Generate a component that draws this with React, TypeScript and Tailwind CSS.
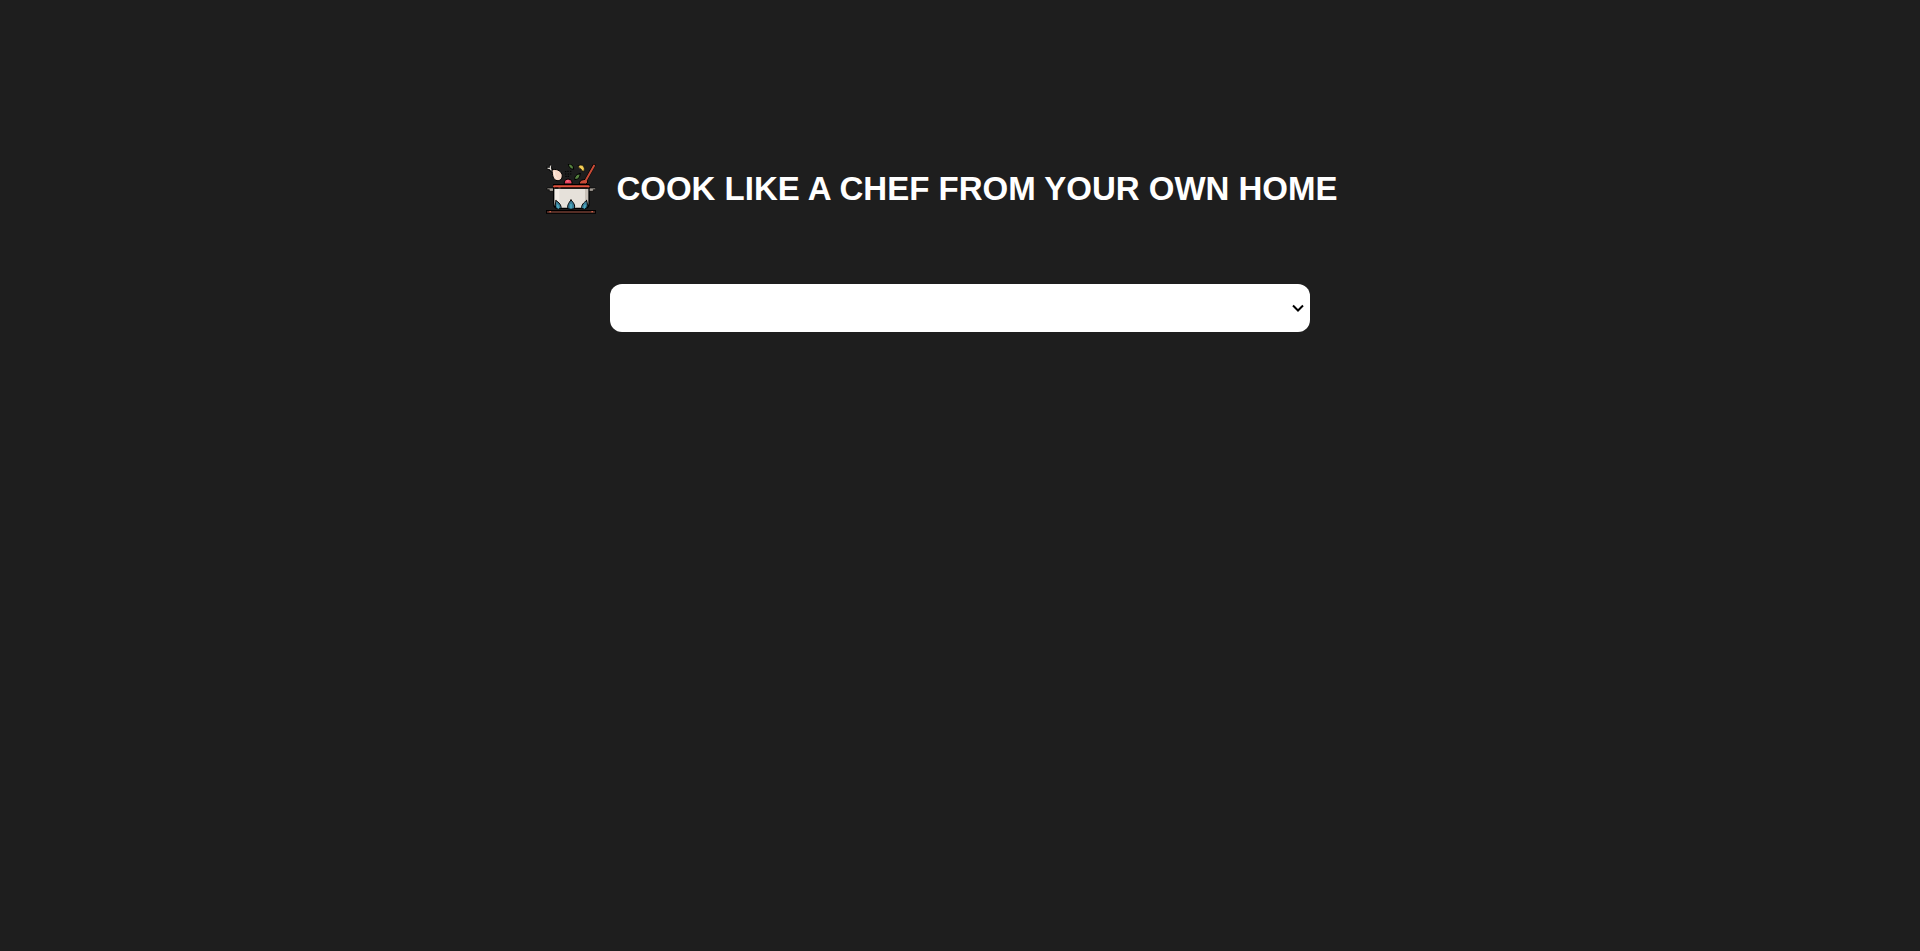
function CookingPot() {
  return (
    <svg
      viewBox="24 24 150 150"
      className="size-[50px] shrink-0"
      stroke="#000"
      strokeWidth="3"
      strokeLinecap="round"
      strokeLinejoin="round"
      aria-hidden="true"
    >
      {/* drumstick */}
      <path d="M43 45 36 39" stroke="#000" strokeWidth="9" />
      <path d="M43 45 36 38M29 37 38 38M38 29 37 38" stroke="#e6e1da" strokeWidth="4" />
      <path d="M26 33q-1 8 7 8M35 26q7 0 6 10l5 6" fill="none" strokeWidth="2" />
      <path d="M42 42C53 37 68 43 72 55C75 67 67 75 57 74C44 70 44 60 42 42Z" fill="#f9d9c7" />
      <path d="M49 48q-1 14 8 20" fill="none" stroke="#fff0e4" strokeWidth="3" />
      {/* steam */}
      <path d="M82 47h2M89 46h2M97 46h2M82 54h2M90 54h2M97 54h2M83 61h2M90 61h2" strokeWidth="3" />
      {/* herbs */}
      <path d="M91 24Q107 23 107 40Q92 39 91 24Z" fill="#55803f" />
      <path d="M126 53Q128 70 110 71Q109 55 126 53Z" fill="#55803f" />
      <path d="M121 29Q127 26 134 28Q142 36 138 46Q131 47 129 39Q121 38 121 29Z" fill="#f6cf55" strokeWidth="2" />
      {/* tomato */}
      <path d="M79 83V78q1-9 11-9q11 0 12 9v5Z" fill="#e9435f" />
      <path d="M87 75h4" stroke="#ff8994" strokeWidth="3" />
      {/* spoon */}
      <path d="M168 28 144 72" fill="none" strokeWidth="9" />
      <path d="M124 83q0-11 13-12l5-1 7 4q1 10-6 10h-19Z" fill="#ca4c38" />
      <path d="M168 29 144 72" fill="none" stroke="#ca4c38" strokeWidth="6" />
      {/* handles */}
      <path d="M48 96H27v5h7v5h14M152 96h21v5h-7v5h-14" fill="#a49d95" strokeWidth="2" />
      {/* pot */}
      <path d="M47 91H153V142q0 14-11 15H58q-11-1-11-15Z" fill="#e6e1da" strokeWidth="4" />
      <path d="M51 99h13v40q0 12-13 3Z" fill="#f4eee7" stroke="none" />
      <path d="M141 99h9v42q-4 7-9-2Z" fill="#c9c1b8" stroke="none" />
      <path d="M45 84H155V98H45Z" fill="#000" stroke="none" />
      <path d="M49 91H151" stroke="#df513d" strokeWidth="7" />
      <path d="M52 96h8M69 96h79" strokeWidth="3" />
      {/* flames */}
      <path d="M54 134C63 139 71 148 69 158H56C50 153 51 143 54 134Z" fill="#3a7d97" />
      <path d="M99 132C110 143 113 152 107 159H91C86 151 91 142 99 132Z" fill="#3a7d97" />
      <path d="M146 134C137 139 129 148 131 158H144C150 153 149 143 146 134Z" fill="#3a7d97" />
      <path d="M59 148l2 8M99 146v10M141 148l-2 8" stroke="#4eabc0" strokeWidth="5" />
      {/* stove */}
      <path d="M24 162H174V173H24Z" fill="#000" stroke="none" />
      <path d="M29 168H169" stroke="#713c32" strokeWidth="5" />
      <path d="M36 167h1M162 167h1" stroke="#e56b50" strokeWidth="4" />
    </svg>
  );
}

export default function App() {
  return (
    <div className="min-h-screen bg-[#1e1e1e] px-4 pt-41 font-['Liberation_Sans',Arial,sans-serif]">
      <header className="flex items-center justify-center gap-5 pr-9">
        <CookingPot />
        <h1 className="text-[33px] leading-[50px] font-bold text-white">COOK LIKE A CHEF FROM YOUR OWN HOME</h1>
      </header>
      <main className="mt-[70px] flex justify-center">
        <div className="relative w-full max-w-[700px]">
          <select
            aria-label="Choose a recipe"
            defaultValue=""
            className="block h-12 w-full appearance-none rounded-xl bg-white px-1 text-base text-black"
          >
            <option value=""></option>
          </select>
          <svg
            viewBox="0 0 12 8"
            className="pointer-events-none absolute inset-y-0 right-1.5 my-auto h-2 w-3"
            fill="none"
            stroke="#000"
            strokeWidth="2"
            aria-hidden="true"
          >
            <path d="M1 1.5 6 6.5 11 1.5" />
          </svg>
        </div>
      </main>
    </div>
  );
}
